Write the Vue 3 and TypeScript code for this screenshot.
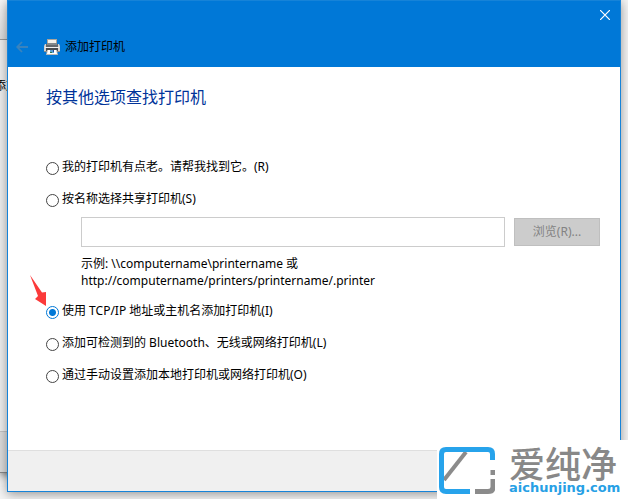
<script setup lang="ts">
import { ref } from 'vue'

type Method = 'legacy' | 'shared' | 'tcpip' | 'wireless' | 'manual'

interface Option {
  id: Method
  label: string
}

const options: Option[] = [
  { id: 'legacy', label: '我的打印机有点老。请帮我找到它。(R)' },
  { id: 'shared', label: '按名称选择共享打印机(S)' },
  { id: 'tcpip', label: '使用 TCP/IP 地址或主机名添加打印机(I)' },
  { id: 'wireless', label: '添加可检测到的 Bluetooth、无线或网络打印机(L)' },
  { id: 'manual', label: '通过手动设置添加本地打印机或网络打印机(O)' },
]

const selected = ref<Method>('tcpip')
const path = ref('')
</script>

<template>
  <div class="desktop">
    <div class="behind" aria-hidden="true">
      <div class="behind-title"></div>
      <div class="behind-body">添加</div>
      <div class="behind-footer"></div>
    </div>

    <main class="dialog">
      <header class="titlebar">
        <div class="caption">
          <button class="close" type="button" aria-label="关闭">
            <svg width="10" height="10" viewBox="0 0 10 10"><path d="M0 0L10 10M10 0L0 10" stroke="#fff" stroke-width="1.2" /></svg>
          </button>
        </div>
        <div class="nav">
          <button class="back" type="button" aria-label="返回" disabled>
            <svg width="12" height="12" viewBox="0 0 12 12" fill="none" stroke="#3a83bd" stroke-width="1.8"><path d="M12 6H1.5M6 1L1.2 6L6 11" /></svg>
          </button>
          <svg class="printer" width="16" height="16" viewBox="0 0 16 16">
            <path d="M3 0H13V6H3Z" fill="#aaa49b" />
            <path d="M4 1H12V6H4Z" fill="#f3f0e9" />
            <path d="M1 5H15L16 7V13H0V7Z" fill="#d2d2d2" />
            <path d="M2 5H14V8H2Z" fill="#62686d" />
            <path d="M3 4H13V6H3Z" fill="#83888b" />
            <path d="M1 8H15V9H1Z" fill="#f0f0f0" />
            <path d="M2 9H14V12H2Z" fill="#464b4f" />
            <path d="M0 12H16V13H0Z" fill="#8a8a8a" />
            <path d="M3 11H13L14 16H2Z" fill="#b8b8b5" />
            <path d="M4 11H12L13 15H3Z" fill="#fff" />
            <path d="M6 11H10V14H6Z" fill="#5ba0d2" />
            <path d="M6 13H8V14H6Z" fill="#2e7646" />
            <path d="M9 11H10V13H9Z" fill="#204c9c" />
          </svg>
          <span class="title">添加打印机</span>
        </div>
      </header>

      <section class="content">
        <h1>按其他选项查找打印机</h1>
        <div class="options" role="radiogroup" aria-label="按其他选项查找打印机">
          <div v-for="option in options" :key="option.id" class="option">
            <label class="choice">
              <input v-model="selected" type="radio" name="method" :value="option.id" />
              <span>{{ option.label }}</span>
              <svg v-if="option.id === 'tcpip'" class="pointer" width="17" height="31" viewBox="0 0 17 31">
                <path d="M0 0L12 17.500L16 17L16 31L5 24L8 21Z" fill="#fb3a3a" />
              </svg>
            </label>
            <div v-if="option.id === 'shared'" class="share">
              <div class="field">
                <input v-model="path" class="path" type="text" aria-label="共享打印机名称" />
                <button class="browse" type="button" disabled>浏览(R)...</button>
              </div>
              <p>示例: \\computername\printername 或<br />http://computername/printers/printername/.printer</p>
            </div>
          </div>
        </div>
      </section>

      <footer class="actions"></footer>
    </main>

    <aside class="brand">
      <svg class="brand-mark" width="56" height="48" viewBox="0 0 56 48" fill="none">
        <path d="M5 33L27 5" stroke="#8b8b8b" stroke-width="4" />
        <path d="M31 44.500H7Q2.500 44.500 2.500 40V7Q2.500 2.500 7 2.500H49Q53.500 2.500 53.500 7V13" stroke="#27a3eb" stroke-width="5" />
        <path d="M54 23V28M54 32V40Q54 44.500 49 44.500H36" stroke="#8b8b8b" stroke-width="5" />
      </svg>
      <div class="brand-text">
        <span class="brand-name">爱纯净</span>
        <span class="brand-site">aichunjing.com</span>
      </div>
    </aside>
  </div>
</template>

<style>
body {
  margin: 0;
}
</style>

<style scoped>
.desktop {
  position: relative;
  box-sizing: border-box;
  display: flex;
  min-height: 100vh;
  padding: 0 7px 7px;
  overflow: hidden;
  background: #f4f4f4;
  color: #000;
  font-family: "Noto Sans", "Noto Sans CJK SC", sans-serif;
  font-size: 12px;
  line-height: 16px;
}

button,
input {
  font: inherit;
}

.behind {
  position: absolute;
  inset: 0 auto 26px 0;
  display: flex;
  flex-direction: column;
  width: 50px;
  border-bottom: 1px solid #888;
  box-shadow: 0 2px 8px #777;
}

.behind-title {
  height: 39px;
  background: linear-gradient(#f6f6f6, #dcdcdc);
  border-bottom: 1px solid #999;
}

.behind-body {
  flex: 1;
  padding-top: 38px;
  background: #efefef;
  text-indent: -6px;
}

.behind-footer {
  height: 40px;
  border-top: 1px solid #c4c4c4;
  background: #dcdcdc;
}

.dialog {
  position: relative;
  box-sizing: border-box;
  display: flex;
  flex: 1;
  flex-direction: column;
  border: 1px solid #1683d8;
  background: #fff;
  box-shadow: 0 2px 10px rgba(0, 0, 0, 0.4);
}

.titlebar {
  height: 66px;
  background: #0078d7;
}

.caption {
  display: flex;
  justify-content: flex-end;
  height: 28px;
}

.close {
  display: grid;
  place-items: center;
  width: 30px;
  height: 28px;
  padding: 0;
  border: 0;
  background: none;
}

.nav {
  display: flex;
  align-items: center;
  height: 36px;
  padding-left: 8px;
}

.back {
  display: flex;
  padding: 0;
  border: 0;
  background: none;
}

.printer {
  margin: 0 5px 0 16px;
}

.content {
  flex: 1;
  padding: 18px 20px 0 38px;
}

h1 {
  margin: 0 0 50px;
  color: #003399;
  font-size: 16px;
  font-weight: 400;
  line-height: 24px;
}

.options {
  display: flex;
  flex-direction: column;
  gap: 16px;
}

.choice {
  position: relative;
  display: flex;
  width: fit-content;
  gap: 3px;
}

.choice input {
  appearance: none;
  box-sizing: border-box;
  width: 13px;
  height: 13px;
  margin: 3px 0 0;
  border: 1px solid #444;
  border-radius: 50%;
  background: #fff;
}

.choice input:checked {
  border-color: #0078d7;
  background: radial-gradient(circle, #0078d7 3px, #fff 4px);
}

.pointer {
  position: absolute;
  top: -28px;
  left: -16px;
}

.share {
  padding: 10px 0 0 35px;
}

.field {
  display: flex;
  align-items: center;
  gap: 9px;
}

.path {
  box-sizing: border-box;
  flex: 1;
  min-width: 0;
  height: 30px;
  padding: 0 6px;
  border: 1px solid #ccc;
  background: #fff;
}

.browse {
  width: 86px;
  height: 28px;
  padding: 0;
  border: 1px solid #bfbfbf;
  background: #ccc;
  color: #838383;
}

.share p {
  margin: 8px 0 -2px;
  line-height: 17px;
}

.actions {
  height: 40px;
  border-top: 1px solid #dfdfdf;
  background: #f0f0f0;
}

.brand {
  position: absolute;
  right: 0;
  bottom: 0;
  box-sizing: border-box;
  display: flex;
  gap: 14px;
  width: 191px;
  height: 59px;
  padding: 4px 0 0 2px;
  background: #fff;
}

.brand-mark {
  margin-top: 3px;
}

.brand-text {
  display: flex;
  flex-direction: column;
  white-space: nowrap;
}

.brand-name {
  color: #888;
  font-family: "Noto Sans CJK SC", sans-serif;
  font-size: 36px;
  font-weight: 500;
  line-height: 36px;
}

.brand-site {
  color: #27a0e5;
  font-family: "DejaVu Sans", sans-serif;
  font-size: 13px;
  font-weight: 700;
  line-height: 16px;
}
</style>
